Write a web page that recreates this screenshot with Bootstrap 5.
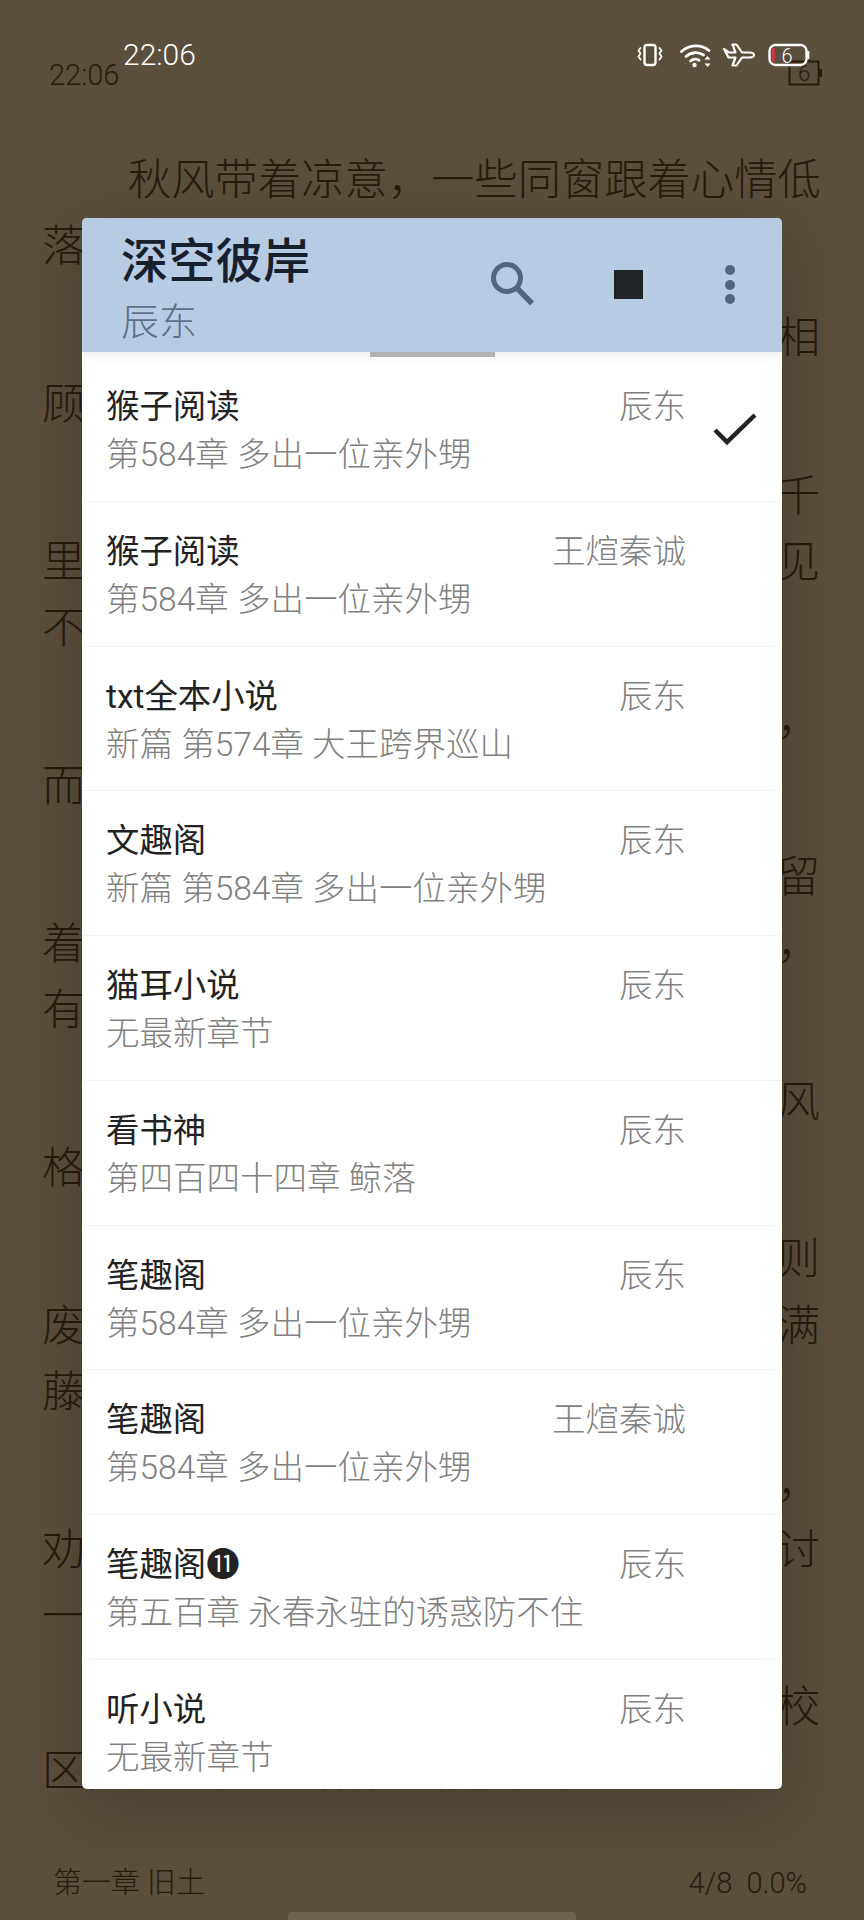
<!DOCTYPE html>
<html lang="zh-CN">
<head>
<meta charset="utf-8">
<title>换源</title>
<link rel="stylesheet" href="https://cdn.jsdelivr.net/npm/bootstrap@5.3.0/dist/css/bootstrap.min.css">
<style>
html,body{margin:0;height:100%;background:#5a4e3c}
body{font-family:Roboto,"Noto Sans CJK SC",sans-serif}
.screen{width:864px;height:1920px;background:#5a4e3c;overflow:hidden;position:relative}
/* reader page behind the dialog */
.reader{height:1920px;color:#261b0d}
.rd-top{padding:60px 40px 0 49px;height:148px;font-size:29px;font-weight:300;line-height:30px}
.rd-batt{width:36px;height:26px;display:block}
.rd-body{padding:0 44px 0 42px;font-size:43.3px;font-weight:300}
.rd-para{margin-bottom:25.2px}
.rd-line{height:66.3px;line-height:66.3px;white-space:nowrap}
.rd-cell{width:43px;text-align:center;display:inline-block}
.rd-first{padding-left:86px}
.rd-peek{margin-top:-3px}
.rd-foot{padding:0 57px 0 53px;font-size:29px;font-weight:300;line-height:40px;margin-top:auto;margin-bottom:9px}
.home-bar{width:288px;height:8px;background:#6d624e;border-radius:4px 4px 0 0;margin:0 auto}
/* system status bar */
.statusbar{position:absolute;left:123px;top:38px;width:687px;height:34px;color:#fff;font-size:30px;font-weight:300;line-height:34px}
.st-ic{display:block;height:26px}
.st-vib{margin-right:16px}
.st-wifi{margin-right:7.5px}
.st-plane{margin-right:13.5px}
/* dialog */
.dlg{position:absolute;left:82px;top:218px;width:700px;height:1571px;background:#fff;border-radius:5px;overflow:hidden;box-shadow:0 18px 60px rgba(0,0,0,.22)}
.dlg-head{height:134px;background:#b7cbe3;padding:0 0 0 39px;position:relative;box-shadow:0 3px 10px rgba(0,0,0,.08);z-index:2}
.dlg-title{font-size:47.3px;font-weight:500;line-height:48px;color:#17212e;padding-top:20px}
.dlg-sub{font-size:38px;font-weight:300;line-height:44px;color:#5d7088;margin-top:14px}
.dlg-acts{width:305px;height:100%}
.scroll-ind{height:5px;width:125px;background:#b3b3b3;margin:0 auto;position:relative;z-index:3}
.src-row{height:144.75px;padding:26px 0 0 24px;border-bottom:1px solid #f3f3f3}
.src-row.is-last{border-bottom:0}
.src-main{width:580px}
.src-name{font-size:33.4px;line-height:48px;color:#222;font-weight:400}
.src-auth{font-size:33.5px;line-height:48px;color:#808080;font-weight:300}
.src-chap{font-size:33.5px;line-height:48px;color:#808080;font-weight:300;white-space:nowrap}
.src-check{width:96px;padding-left:27px;padding-top:30px}
</style>
</head>
<body>
<div class="screen">
  <div class="reader d-flex flex-column">
    <div class="rd-top d-flex justify-content-between align-items-start">
      <span>22:06</span>
      <svg class="rd-batt" viewBox="0 0 36 26" fill="none"><rect x="1.5" y="1.5" width="29" height="23" stroke="#261b0d" stroke-width="2"/><rect x="31" y="9" width="3" height="8" fill="#261b0d"/><text x="16" y="21" font-size="22" font-family="Roboto" font-weight="300" text-anchor="middle" fill="#261b0d">6</text></svg>
    </div>
    <div class="rd-body">
      <div class="rd-para">
        <div class="rd-line rd-first">秋风带着凉意，一些同窗跟着心情低</div>
        <div class="rd-line">落</div>
      </div>
      <div class="rd-para">
        <div class="rd-line d-flex justify-content-end">相</div>
        <div class="rd-line">顾</div>
      </div>
      <div class="rd-para">
        <div class="rd-line d-flex justify-content-end">千</div>
        <div class="rd-line d-flex justify-content-between"><span>里</span><span>见</span></div>
        <div class="rd-line">不</div>
      </div>
      <div class="rd-para">
        <div class="rd-line d-flex justify-content-end"><span class="rd-cell">，</span></div>
        <div class="rd-line">而</div>
      </div>
      <div class="rd-para">
        <div class="rd-line d-flex justify-content-end">留</div>
        <div class="rd-line d-flex justify-content-between"><span>着</span><span class="rd-cell">，</span></div>
        <div class="rd-line">有</div>
      </div>
      <div class="rd-para">
        <div class="rd-line d-flex justify-content-end">风</div>
        <div class="rd-line">格</div>
      </div>
      <div class="rd-para">
        <div class="rd-line d-flex justify-content-end">则</div>
        <div class="rd-line d-flex justify-content-between"><span>废</span><span>满</span></div>
        <div class="rd-line">藤</div>
      </div>
      <div class="rd-para">
        <div class="rd-line d-flex justify-content-end"><span class="rd-cell">，</span></div>
        <div class="rd-line d-flex justify-content-between"><span>劝</span><span>讨</span></div>
        <div class="rd-line">一</div>
      </div>
      <div class="rd-para">
        <div class="rd-line d-flex justify-content-end">校</div>
        <div class="rd-line rd-peek">区，一些同学结伴在校园里走</div>
      </div>
    </div>
    <div class="rd-foot d-flex justify-content-between">
      <span>第一章 旧土</span><span>4/8&nbsp; 0.0%</span>
    </div>
    <div class="home-bar"></div>
  </div>

  <div class="statusbar d-flex justify-content-between align-items-center">
    <span>22:06</span>
    <div class="d-flex align-items-center">
      <svg class="st-ic st-vib" width="28" viewBox="0 0 28 26" fill="none" stroke="#fff" stroke-linecap="round" stroke-linejoin="round"><rect x="8.5" y="3" width="11" height="20" rx="2.5" stroke-width="2.4"/><path d="M4.5 6l-2 2.5 2 3-2 3 2 3M23.500 6l2 2.500-2 3 2 3-2 3" stroke-width="1.800"/></svg>
      <svg class="st-ic st-wifi" width="34" viewBox="0 0 34 26" fill="none" stroke="#fff" stroke-linecap="round"><path d="M1.500 9.500C9 2.500 21 2 29 8.500" stroke-width="2.800"/><path d="M6 14.500c5-4.500 12-5 17.500-1.500" stroke-width="2.800"/><path d="M10.500 19c2.500-2 6-2.300 8.500-.8" stroke-width="2.800"/><circle cx="14.500" cy="23" r="2.200" fill="#fff" stroke="none"/><path d="M27.500 14l-3 3.500h6zM27.500 25l-3-3.500h6z" fill="#fff" stroke="none"/></svg>
      <svg class="st-ic st-plane" width="33" viewBox="0 0 33 26" fill="none" stroke="#fff" stroke-width="2.200" stroke-linejoin="round"><path d="M2 7l5 3.500h6.500L10.500 2.500h4L20 10.500h7.500c2.500 0 4.500 1.200 4.500 2.500s-2 2.500-4.500 2.500H20l-5.500 8h-4l3-8H6.500z"/></svg>
      <svg class="st-ic" width="42" viewBox="0 0 42 26" fill="none"><rect x="1.500" y="3" width="37" height="20" rx="6" stroke="#fff" stroke-width="2.400"/><rect x="3.500" y="6" width="3.500" height="14" fill="#c23a48"/><path d="M40.300 9v8" stroke="#fff" stroke-width="2"/><text x="19" y="20.500" font-size="20" font-family="Roboto" font-weight="300" text-anchor="middle" fill="#fff">6</text></svg>
    </div>
  </div>

  <div class="dlg">
    <div class="dlg-head d-flex justify-content-between">
      <div>
        <div class="dlg-title">深空彼岸</div>
        <div class="dlg-sub">辰东</div>
      </div>
      <svg class="dlg-acts" viewBox="477 218 305 134">
        <circle cx="507" cy="278" r="13.500" fill="none" stroke="#53657d" stroke-width="5"/>
        <path d="M517 288l15 15.500" stroke="#53657d" stroke-width="5.500"/>
        <rect x="614" y="270" width="29" height="29" fill="#1f2226"/>
        <circle cx="730" cy="270" r="5" fill="#53657d"/><circle cx="730" cy="285" r="5" fill="#53657d"/><circle cx="730" cy="299" r="5" fill="#53657d"/>
      </svg>
    </div>
    <div class="scroll-ind"></div>

    <div class="src-row d-flex">
      <div class="src-main">
        <div class="d-flex justify-content-between"><span class="src-name">猴子阅读</span><span class="src-auth">辰东</span></div>
        <div class="src-chap">第584章 多出一位亲外甥</div>
      </div>
      <div class="src-check">
        <svg width="44" height="34" viewBox="0 0 44 34" fill="none" stroke="#222" stroke-width="4.500"><path d="M2 17l12 12L42 2"/></svg>
      </div>
    </div>
    <div class="src-row"><div class="src-main">
      <div class="d-flex justify-content-between"><span class="src-name">猴子阅读</span><span class="src-auth">王煊秦诚</span></div>
      <div class="src-chap">第584章 多出一位亲外甥</div></div></div>
    <div class="src-row"><div class="src-main">
      <div class="d-flex justify-content-between"><span class="src-name">txt全本小说</span><span class="src-auth">辰东</span></div>
      <div class="src-chap">新篇 第574章 大王跨界巡山</div></div></div>
    <div class="src-row"><div class="src-main">
      <div class="d-flex justify-content-between"><span class="src-name">文趣阁</span><span class="src-auth">辰东</span></div>
      <div class="src-chap">新篇 第584章 多出一位亲外甥</div></div></div>
    <div class="src-row"><div class="src-main">
      <div class="d-flex justify-content-between"><span class="src-name">猫耳小说</span><span class="src-auth">辰东</span></div>
      <div class="src-chap">无最新章节</div></div></div>
    <div class="src-row"><div class="src-main">
      <div class="d-flex justify-content-between"><span class="src-name">看书神</span><span class="src-auth">辰东</span></div>
      <div class="src-chap">第四百四十四章 鲸落</div></div></div>
    <div class="src-row"><div class="src-main">
      <div class="d-flex justify-content-between"><span class="src-name">笔趣阁</span><span class="src-auth">辰东</span></div>
      <div class="src-chap">第584章 多出一位亲外甥</div></div></div>
    <div class="src-row"><div class="src-main">
      <div class="d-flex justify-content-between"><span class="src-name">笔趣阁</span><span class="src-auth">王煊秦诚</span></div>
      <div class="src-chap">第584章 多出一位亲外甥</div></div></div>
    <div class="src-row"><div class="src-main">
      <div class="d-flex justify-content-between"><span class="src-name">笔趣阁⓫</span><span class="src-auth">辰东</span></div>
      <div class="src-chap">第五百章 永春永驻的诱惑防不住</div></div></div>
    <div class="src-row is-last"><div class="src-main">
      <div class="d-flex justify-content-between"><span class="src-name">听小说</span><span class="src-auth">辰东</span></div>
      <div class="src-chap">无最新章节</div></div></div>
  </div>
</div>
<script src="https://cdn.jsdelivr.net/npm/bootstrap@5.3.0/dist/js/bootstrap.bundle.min.js"></script>
</body>
</html>
